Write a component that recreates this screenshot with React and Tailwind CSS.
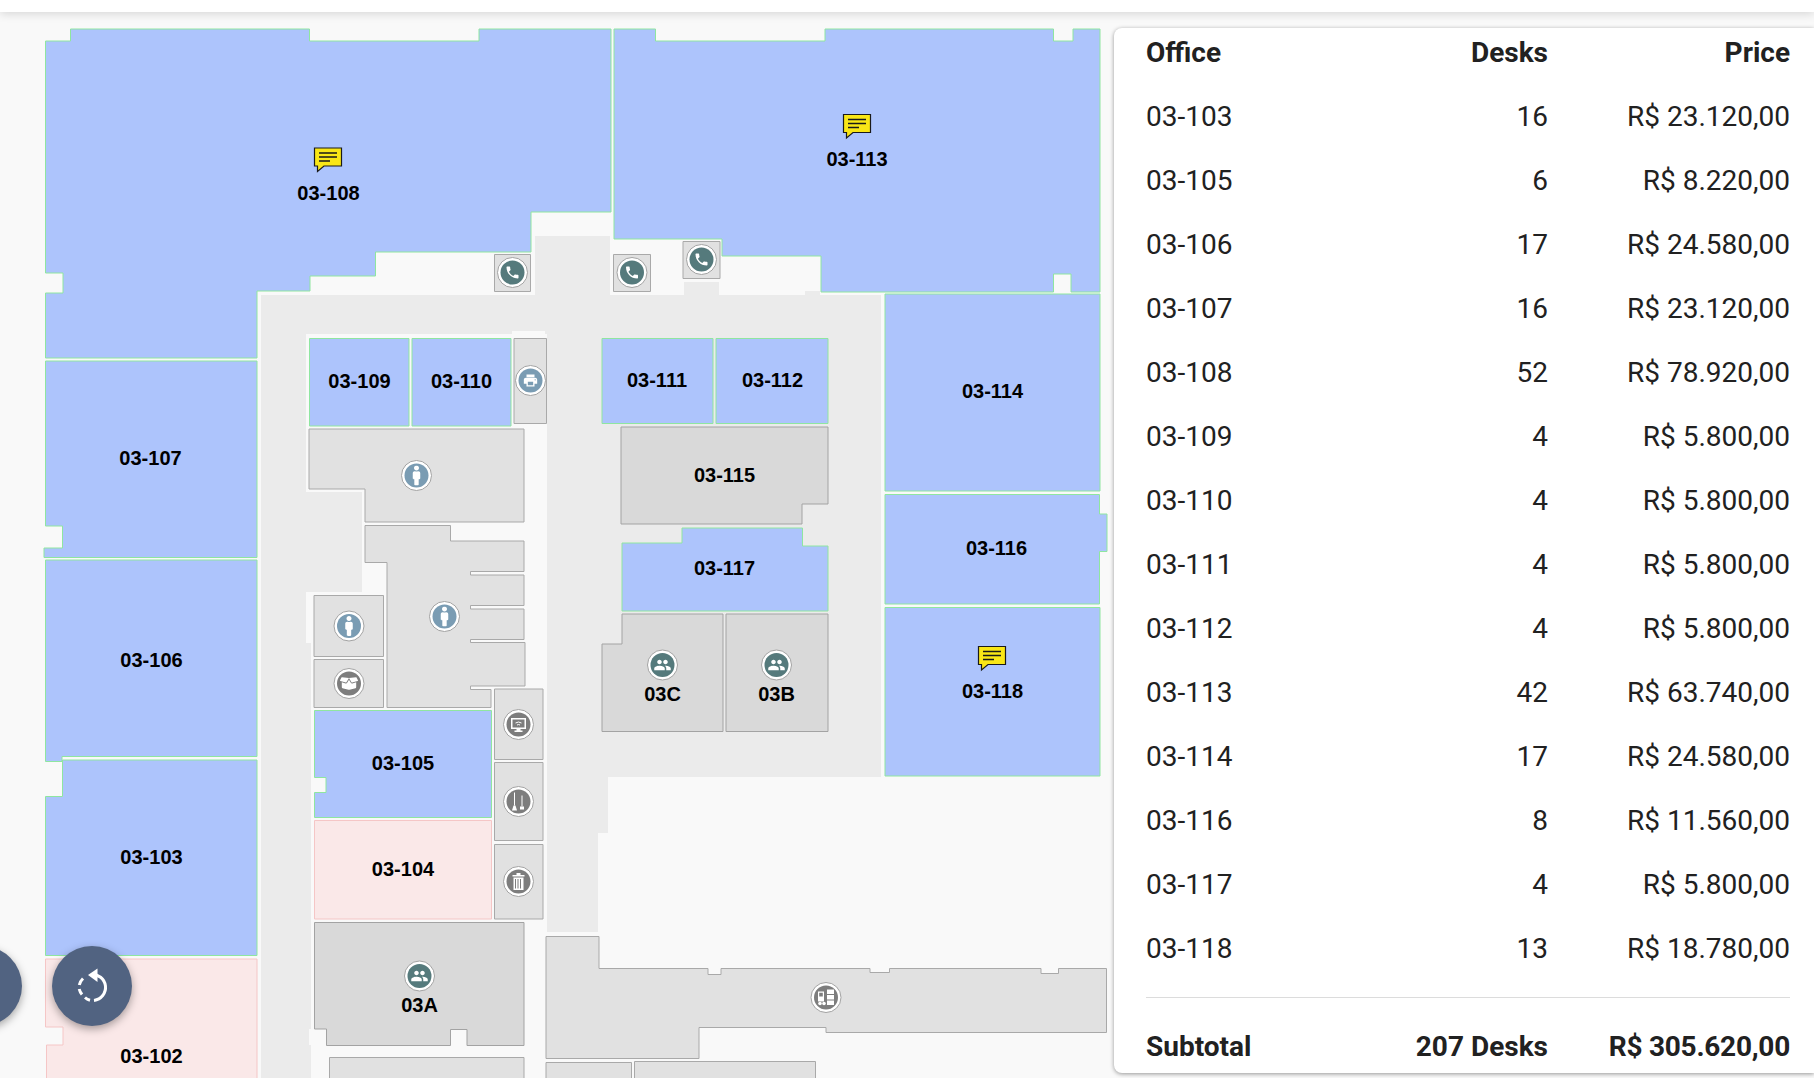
import React from 'react';
import { MdPhone, MdPeople, MdPrint } from 'react-icons/md';
import { FaMale, FaBoxOpen } from 'react-icons/fa';

const rows = [
  ['03-103', '16', 'R$ 23.120,00'],
  ['03-105', '6', 'R$ 8.220,00'],
  ['03-106', '17', 'R$ 24.580,00'],
  ['03-107', '16', 'R$ 23.120,00'],
  ['03-108', '52', 'R$ 78.920,00'],
  ['03-109', '4', 'R$ 5.800,00'],
  ['03-110', '4', 'R$ 5.800,00'],
  ['03-111', '4', 'R$ 5.800,00'],
  ['03-112', '4', 'R$ 5.800,00'],
  ['03-113', '42', 'R$ 63.740,00'],
  ['03-114', '17', 'R$ 24.580,00'],
  ['03-116', '8', 'R$ 11.560,00'],
  ['03-117', '4', 'R$ 5.800,00'],
  ['03-118', '13', 'R$ 18.780,00'],
];

const BLUE = { fill: '#adc4fc', stroke: '#8fe6a0' };
const PINK = { fill: '#fae8e8', stroke: '#f5c6c6' };
const DARK = { fill: '#d9d9d9', stroke: '#a3a3a3' };
const LIGHT = { fill: '#e1e1e1', stroke: '#a9a9a9' };

const rect = (x1, y1, x2, y2) => `${x1},${y1} ${x2},${y1} ${x2},${y2} ${x1},${y2}`;

const rooms = [
  [BLUE, '45.5,41 70.5,41 70.5,29 309.5,29 309.5,41 479,41 479,29 611,29 611,212 531,212 531,252 375.5,252 375.5,276 310,276 310,291 257,291 257,358 45.5,358 45.5,293 63,293 63,273 45.5,273'],
  [BLUE, '614,29 655.5,29 655.5,41 825,41 825,29 1053.5,29 1053.5,41 1073,41 1073,29 1100,29 1100,292 1071,292 1071,274 1053.5,274 1053.5,292 821,292 821,256 722,256 722,239 614,239'],
  [BLUE, '45.5,361 257,361 257,557.5 44,557.5 44,548 62.5,548 62.5,526 45.5,526'],
  [BLUE, '45.5,560 257,560 257,756.5 62,756.5 62,761.5 45.5,761.5'],
  [BLUE, '62.5,760 257,760 257,955.5 45.5,955.5 45.5,796.5 62.5,796.5'],
  [PINK, '45.5,959 257,959 257,1090 46.5,1090 46.5,1045 63,1045 63,1027 45.5,1027'],
  [BLUE, rect(885, 294, 1100, 491)],
  [BLUE, '885,494.5 1099.5,494.5 1099.5,514 1107,514 1107,551.5 1099.5,551.5 1099.5,604 885,604'],
  [BLUE, rect(885, 607.5, 1100, 776)],
  [BLUE, rect(602, 338.5, 713, 423.5)],
  [BLUE, rect(716, 338.5, 828, 423.5)],
  [DARK, '621,427 828,427 828,504 802,504 802,524 621,524'],
  [BLUE, '622,543 682,543 682,528 802.5,528 802.5,546 828,546 828,611 622,611'],
  [DARK, '622,614 723,614 723,731.5 602,731.5 602,644 622,644'],
  [DARK, rect(726, 614, 828, 731.5)],
  [BLUE, rect(309.5, 338.5, 409, 426)],
  [BLUE, rect(412, 338.5, 511, 426)],
  [LIGHT, rect(514, 338.5, 546.5, 423.5)],
  [LIGHT, '309,429 524,429 524,522 365,522 365,489 309,489'],
  [LIGHT, '365,525.5 450.5,525.5 450.5,541 524,541 524,571.5 470.5,571.5 470.5,575 524,575 524,605.5 470.5,605.5 470.5,609 524,609 524,639.5 470.5,639.5 470.5,642.5 525,642.5 525,686 470.5,686 470.5,689.5 491,689.5 491,707.5 387,707.5 387,562.5 365,562.5'],
  [LIGHT, rect(314, 595.5, 383.5, 656.5)],
  [LIGHT, rect(314, 659.5, 383.5, 707.5)],
  [BLUE, '314.5,710.5 491.5,710.5 491.5,817.5 314.5,817.5 314.5,792.5 326,792.5 326,777.5 314.5,777.5'],
  [PINK, rect(314.5, 820.5, 491.5, 919)],
  [LIGHT, rect(494.5, 689, 543, 759.5)],
  [LIGHT, rect(494.5, 762.5, 543, 840.5)],
  [LIGHT, rect(494.5, 844.5, 543, 919)],
  [DARK, '314.5,922.5 524,922.5 524,1045.5 467,1045.5 467,1029.5 450.5,1029.5 450.5,1045.5 326.5,1045.5 326.5,1029 314.5,1029'],
  [LIGHT, rect(329.5, 1057.5, 524, 1090)],
  [LIGHT, '546,936.5 599,936.5 599,968.5 708,968.5 708,974.5 721,974.5 721,968.5 870,968.5 870,972.5 889.5,972.5 889.5,968.5 1041,968.5 1041,973.5 1058.5,973.5 1058.5,968.5 1106.5,968.5 1106.5,1032.5 826,1032.5 826,1027.5 699,1027.5 699,1058.5 546,1058.5'],
  [LIGHT, rect(546, 1062.5, 631.5, 1090)],
  [LIGHT, rect(634.5, 1061.5, 815.5, 1090)],
  [LIGHT, rect(494.5, 254.5, 530.5, 291.5)],
  [LIGHT, rect(613.5, 254.5, 650.5, 291.5)],
  [LIGHT, rect(683, 241.5, 720, 278.5)],
];

const labels = [
  ['03-108', 328.5, 192.5], ['03-113', 857, 158.5], ['03-109', 359.5, 380.5], ['03-110', 461.5, 380.5],
  ['03-111', 657, 379.5], ['03-112', 772.5, 379.5], ['03-114', 992.5, 391], ['03-115', 724.5, 474.5],
  ['03-116', 996.5, 547.5], ['03-117', 724.5, 567.5], ['03-118', 992.5, 690.5], ['03C', 662.5, 693.5],
  ['03B', 776.5, 693.5], ['03-107', 150.5, 458], ['03-106', 151.5, 659.5], ['03-103', 151.5, 856.5],
  ['03-102', 151.5, 1056], ['03-105', 403, 762.5], ['03-104', 403, 868.5], ['03A', 419.5, 1005],
];

const TEAL = '#557a7c';
const STEEL = '#7a9cb3';
const GRAY = '#7d7d7d';

function Marker({ x, y, color, children }) {
  return (
    <g transform={`translate(${x} ${y})`}>
      <circle r="15" fill="#ffffff" stroke="#a3a3a3" strokeWidth="1" />
      <circle r="12" fill={color} />
      <g fill="#ffffff" color="#ffffff">{children}</g>
    </g>
  );
}

function Bubble({ x, y }) {
  return (
    <g transform={`translate(${x} ${y})`}>
      <path d="M.5.5H27.500V18.500H10L3.500 24V18.500H.5Z" fill="#f9e616" stroke="#1a1a1a" strokeWidth="1.2" />
      <path d="M5 5.500H23M5 9.500H23M5 13.500H16" stroke="#1a1a1a" strokeWidth="1.6" fill="none" />
    </g>
  );
}

function FloorPlan() {
  return (
    <svg viewBox="0 12 1114 1066" className="block w-[1114px] h-[1066px]">
      {/* corridor */}
      <polygon fill="#ebebeb" points="261,295 881,295 881,777 608,777 608,833 598,833 598,932 547,932 547,334 306,334 306,492 362,492 362,592 306,592 306,643 311,643 311,1029 309,1029 309,1045 311,1045 311,1078 261,1078" />
      <rect x="535" y="236" width="75" height="59" fill="#ebebeb" />
      <rect x="684" y="282" width="35" height="13" fill="#ebebeb" />
      <rect x="805" y="291" width="15" height="4" fill="#ebebeb" />
      <rect x="512" y="331" width="33" height="3" fill="#f9f9f9" />
      {rooms.map(([tone, points], i) => (
        <polygon key={i} points={points} fill={tone.fill} stroke={tone.stroke} strokeWidth="1" />
      ))}

      <Marker x={512.5} y={272.5} color={TEAL}><MdPhone x="-8" y="-8" size="16" /></Marker>
      <Marker x={632} y={272.5} color={TEAL}><MdPhone x="-8" y="-8" size="16" /></Marker>
      <Marker x={701.5} y={259.5} color={TEAL}><MdPhone x="-8" y="-8" size="16" /></Marker>
      <Marker x={530.5} y={380.5} color={STEEL}><MdPrint x="-8" y="-8" size="16" /></Marker>
      <Marker x={416.5} y={475.5} color={STEEL}><FaMale x="-10" y="-10" size="20" /></Marker>
      <Marker x={444.5} y={616.5} color={STEEL}><FaMale x="-10" y="-10" size="20" /></Marker>
      <Marker x={349} y={626} color={STEEL}><FaMale x="-10" y="-10" size="20" /></Marker>
      <Marker x={349} y={683.5} color={GRAY}><FaBoxOpen x="-9" y="-9" size="18" /></Marker>

      <Marker x={518.5} y={724.5} color={GRAY}>
        <path d="M-7.500-6.500H7.500V4.500H2V6H4V7.500H-4V6H-2V4.500H-7.500ZM-6-5V3H6V-5Z" fillRule="evenodd" />
        <path d="M-3-1.500Q0-3.500 3-1.500M-1.500.5Q0-.5 1.500.5" stroke="#ffffff" strokeWidth="1" fill="none" />
      </Marker>
      <Marker x={518.5} y={801.5} color={GRAY}>
        <rect x="-4.500" y="-9" width="1" height="13" />
        <path d="M-5 4H-3L-1.500 9H-6.500Z" />
        <rect x="3" y="-6" width="1" height="11" />
        <rect x="1.500" y="5" width="4" height="3" />
      </Marker>
      <Marker x={518.5} y={881.5} color={GRAY}>
        <path d="M-6-6.500H-2V-8.500H2V-6.500H6V-5H-6ZM-5-4H5V8.500H-5ZM-3.500-2.500V7H-2.500V-2.500ZM-1-2.500V7H0V-2.500ZM1.500-2.500V7H2.500V-2.500Z" fillRule="evenodd" />
      </Marker>
      <Marker x={826} y={997.5} color={GRAY}>
        <path d="M-8-6H-2V4H-8ZM-6.800-4.800V-1H-3.200V-4.800Z" fillRule="evenodd" />
        <circle cx="-6" cy="6" r="1.800" />
        <circle cx="-2" cy="6" r="1.800" />
        <rect x="1" y="-8" width="7" height="4.500" />
        <rect x="1" y="-2.500" width="7" height="4.500" />
        <rect x="1" y="3" width="7" height="4.500" />
      </Marker>
      <Marker x={419.5} y={976} color={TEAL}><MdPeople x="-9" y="-9" size="18" /></Marker>
      <Marker x={662.5} y={665} color={TEAL}><MdPeople x="-9" y="-9" size="18" /></Marker>
      <Marker x={776.5} y={665} color={TEAL}><MdPeople x="-9" y="-9" size="18" /></Marker>

      <Bubble x={314} y={147.5} />
      <Bubble x={843} y={114} />
      <Bubble x={978} y={646} />

      {labels.map(([text, x, y]) => (
        <text key={text} x={x} y={y} textAnchor="middle" dominantBaseline="central" fill="#000000"
          className="font-['Liberation_Sans',sans-serif] text-[20px] font-bold">
          {text}
        </text>
      ))}
    </svg>
  );
}

function RoundButton({ className, children }) {
  return (
    <button className={`absolute top-[934px] size-20 rounded-full bg-[#516381] shadow-[0_3px_8px_rgba(0,0,0,0.35)] flex items-center justify-center ${className}`}>
      {children}
    </button>
  );
}

export default function App() {
  return (
    <div className="h-screen flex flex-col overflow-hidden bg-[#f9f9f9] font-['Roboto',sans-serif]">
      <div className="h-3 shrink-0 bg-white relative z-10 shadow-[0_2px_10px_rgba(0,0,0,0.14)]" />
      <div className="flex flex-1 min-h-0">
        <div className="relative w-[1114px] shrink-0 overflow-hidden">
          <FloorPlan />
          <RoundButton className="-left-[58px]" />
          <RoundButton className="left-[52px]">
            <svg width="40" height="40" viewBox="0 0 40 40" fill="none" stroke="#ffffff" strokeWidth="3">
              <path d="M19 8.500A13 13 0 1 1 22 34.400" />
              <path d="M16 9L25.500 2.500V16Z" fill="#ffffff" stroke="none" />
              <path d="M11 12.500A13 13 0 0 0 7.300 19M7.200 23A13 13 0 0 0 10 28.500M13 31.500A13 13 0 0 0 18 34.300" />
            </svg>
          </RoundButton>
        </div>
        <div className="flex-1 pt-4 min-w-0">
          <div className="h-[1045px] bg-white rounded-l-lg pt-px pl-8 pr-6 text-[#212121] text-[28px] shadow-[0_1px_4px_rgba(0,0,0,0.4)] overflow-hidden">
            <div className="grid grid-cols-[1fr_160px_242px] items-center h-12 mb-2 font-bold">
              <div>Office</div>
              <div className="text-right">Desks</div>
              <div className="text-right">Price</div>
            </div>
            {rows.map(([office, desks, price]) => (
              <div key={office} className="grid grid-cols-[1fr_160px_242px] items-center h-16">
                <div>{office}</div>
                <div className="text-right">{desks}</div>
                <div className="text-right">{price}</div>
              </div>
            ))}
            <div className="mt-4 h-px bg-[#dcdcdc]" />
            <div className="grid grid-cols-[1fr_160px_242px] items-center h-[75px] pt-[23px] font-bold">
              <div>Subtotal</div>
              <div className="text-right whitespace-nowrap">207 Desks</div>
              <div className="text-right whitespace-nowrap tracking-[-0.25px]">R$ 305.620,00</div>
            </div>
          </div>
        </div>
      </div>
    </div>
  );
}
